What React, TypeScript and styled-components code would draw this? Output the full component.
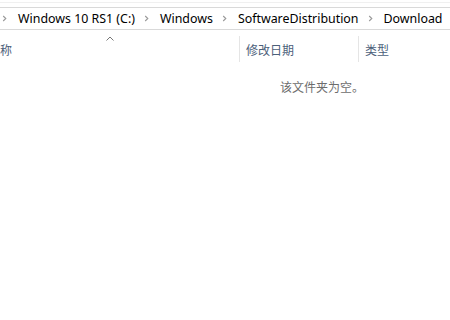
import styled, { createGlobalStyle } from "styled-components";

const GlobalStyle = createGlobalStyle`
  html, body {
    margin: 0;
    padding: 0;
    background: #ffffff;
    overflow: hidden;
  }
`;

const Window = styled.div`
  width: 450px;
  height: 320px;
  overflow: hidden;
  background: #ffffff;
  font-family: "Segoe UI", "Noto Sans", "Noto Sans CJK SC", sans-serif;
  font-size: 12px;
  color: #000000;
`;

const Ribbon = styled.div`
  height: 2px;
  border-bottom: 1px solid #f0f0f0;
`;

const AddressBar = styled.div`
  margin-top: 4px;
  height: 21px;
  border-top: 1px solid #d9d9d9;
  border-bottom: 1px solid #d9d9d9;
  display: flex;
  align-items: center;
  white-space: nowrap;
  padding-left: 2px;
`;

const Crumb = styled.span`
  display: flex;
  align-items: center;
  font-size: 12.4px;
  line-height: 21px;
  padding: 0 9px 0 0;
`;

const Chevron = styled.svg`
  width: 5px;
  height: 7px;
  margin-right: 11px;
  flex: none;
`;

const Header = styled.div`
  margin-top: 6px;
  height: 26px;
  display: grid;
  grid-template-columns: 239px 119px 92px;
  position: relative;
`;

const HeaderCell = styled.div<{ $first?: boolean }>`
  display: flex;
  align-items: center;
  padding-left: ${(p) => (p.$first ? "0" : "6px")};
  border-left: ${(p) => (p.$first ? "none" : "1px solid #e5e5e5")};
  color: #4c607a;
  font-family: "Noto Sans CJK SC", sans-serif;
  font-size: 12px;
  overflow: hidden;
  position: relative;
`;

const CutLabel = styled.span`
  margin-left: -12px;
`;

const SortArrow = styled.svg`
  position: absolute;
  left: 106px;
  top: 0px;
  width: 8px;
  height: 5px;
`;

const Empty = styled.div`
  margin-top: 16px;
  padding-left: 280px;
  color: #6d6d6d;
  font-family: "Noto Sans CJK SC", sans-serif;
  font-size: 12px;
`;

const ChevronIcon = () => (
  <Chevron viewBox="0 0 5 7">
    <path d="M1.2 1 L3.8 3.5 L1.2 6" fill="none" stroke="#9a9a9a" strokeWidth="1.1" />
  </Chevron>
);

const crumbs = ["Windows 10 RS1 (C:)", "Windows", "SoftwareDistribution", "Download"];

export default function App() {
  return (
    <Window>
      <GlobalStyle />
      <Ribbon />
      <AddressBar>
        {crumbs.map((c) => (
          <Crumb key={c}>
            <ChevronIcon />
            {c}
          </Crumb>
        ))}
      </AddressBar>
      <Header>
        <HeaderCell $first>
          <CutLabel>名称</CutLabel>
          <SortArrow viewBox="0 0 8 5">
            <path d="M0.5 4.5 L4 1 L7.5 4.5" fill="none" stroke="#777" strokeWidth="1" />
          </SortArrow>
        </HeaderCell>
        <HeaderCell>修改日期</HeaderCell>
        <HeaderCell>类型</HeaderCell>
      </Header>
      <Empty>该文件夹为空。</Empty>
    </Window>
  );
}
